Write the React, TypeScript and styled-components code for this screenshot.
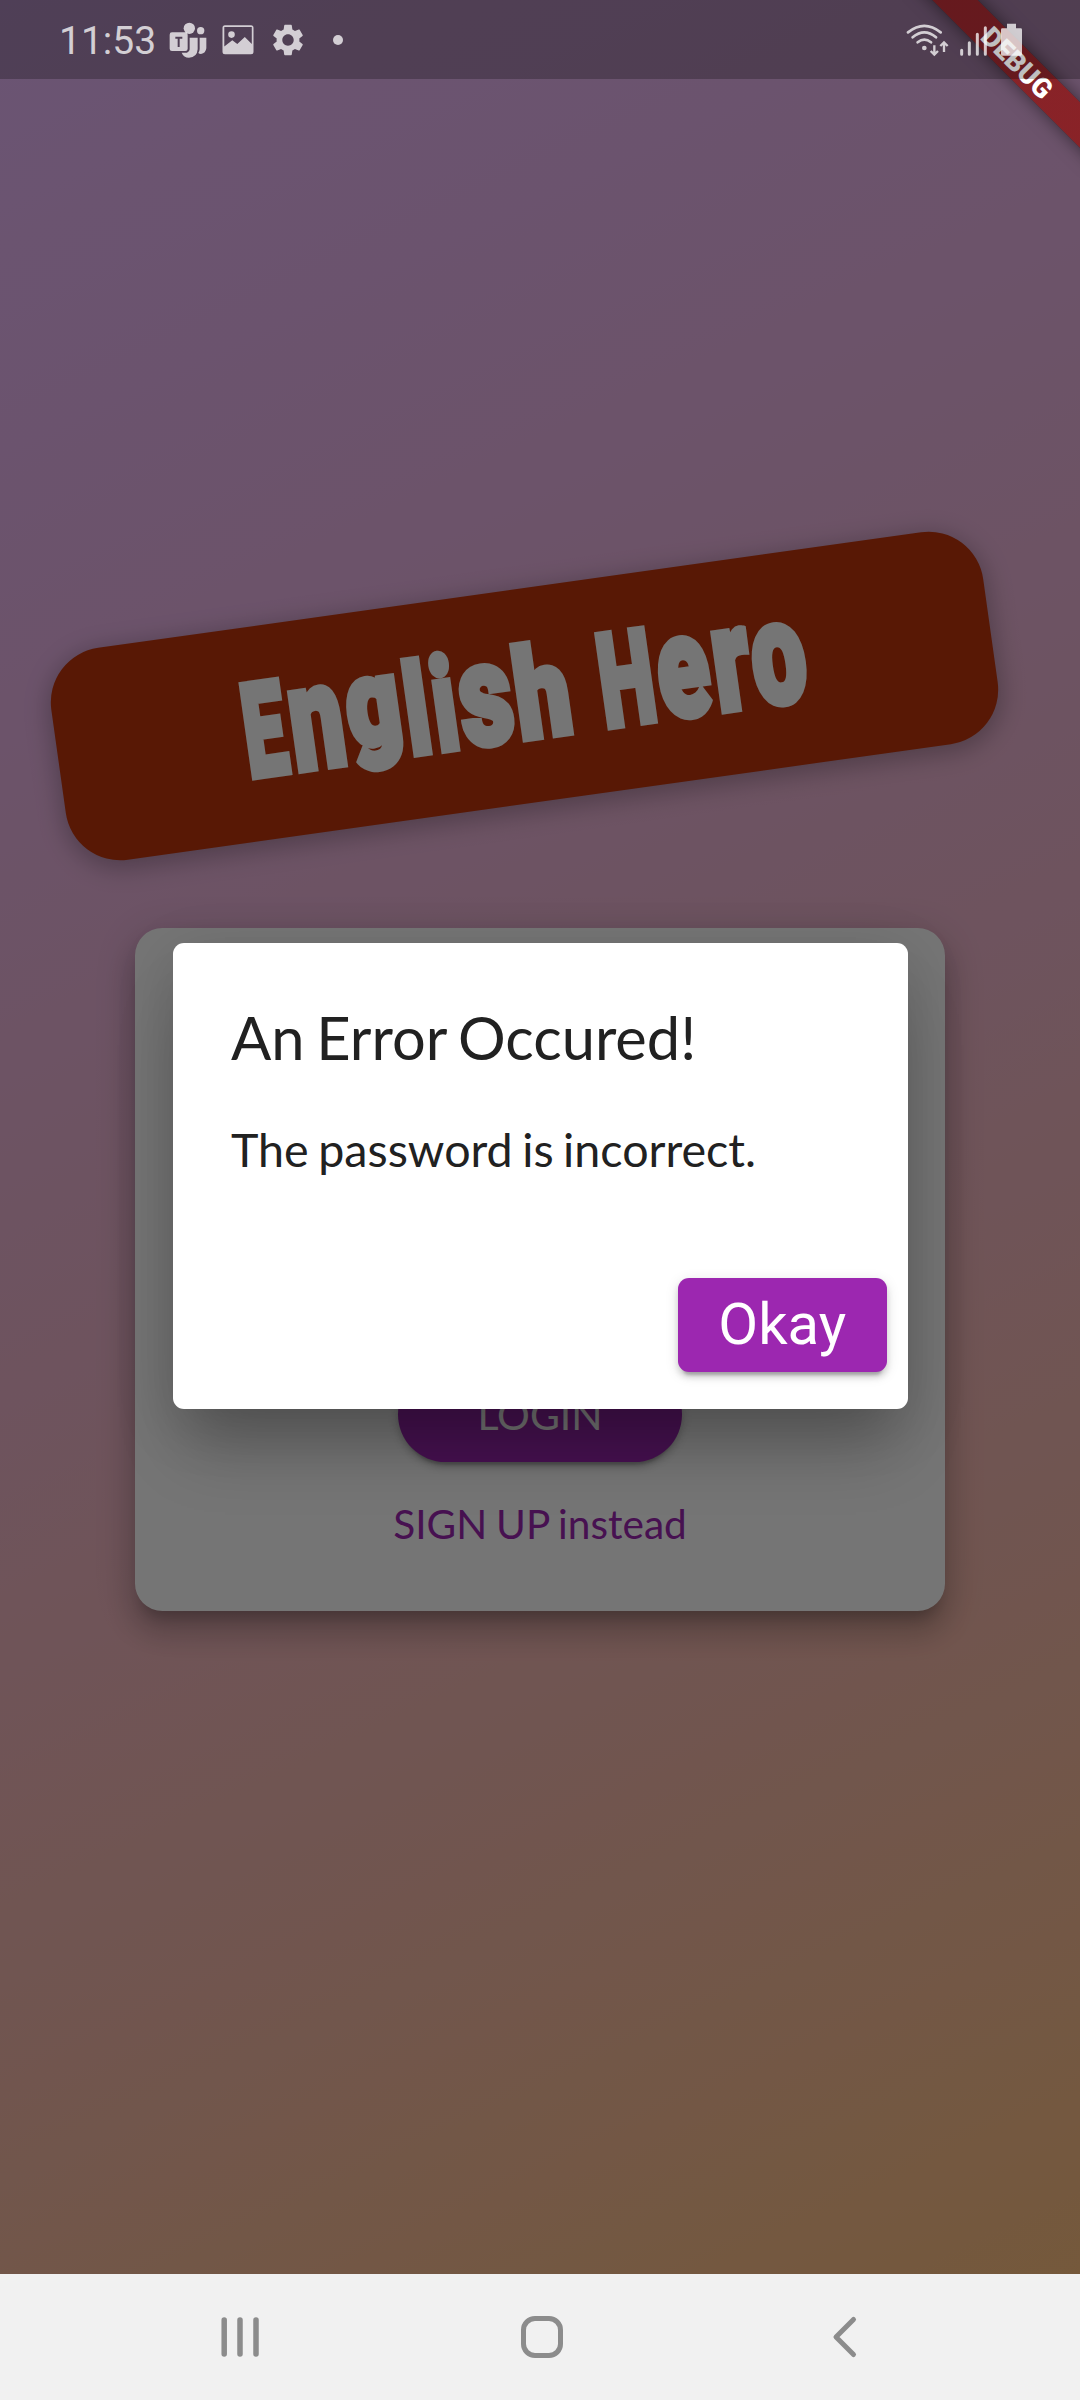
import React from "react";
import styled, { createGlobalStyle } from "styled-components";

const Global = createGlobalStyle`
  html, body { margin: 0; padding: 0; }
  body { font-family: Lato, "Liberation Sans", sans-serif; -webkit-font-smoothing: antialiased; }
  * { box-sizing: border-box; }
`;

const Phone = styled.div`
  width: 1080px;
  height: 2400px;
  display: flex;
  flex-direction: column;
  overflow: hidden;
`;

const Stage = styled.main`
  height: 2274px;
  display: grid;
  grid-template: 100% / 100%;
  overflow: hidden;
  > * { grid-area: 1 / 1; }
`;

const AuthPage = styled.section`
  display: flex;
  flex-direction: column;
  align-items: center;
  padding-top: 589px;
  background: linear-gradient(
    154.6deg,
    rgb(232, 184, 252) 0%,
    rgb(235, 181, 232) 25%,
    rgb(239, 182, 205) 50%,
    rgb(246, 186, 171) 75%,
    rgb(254, 194, 130) 100%
  );
`;

const Banner = styled.div`
  width: 941px;
  height: 214px;
  flex: none;
  margin-right: 31px;
  border-radius: 55px;
  background: #bf360c;
  box-shadow: 0 5.5px 24px 3px rgba(0, 0, 0, 0.26);
  transform: rotate(-8deg);
`;

const AuthCard = styled.div`
  width: 810px;
  height: 682.5px;
  margin-top: 125px;
  padding-bottom: 49px;
  border-radius: 27.5px;
  background: #fff;
  display: flex;
  flex-direction: column;
  justify-content: flex-end;
  align-items: center;
  gap: 34px;
  box-shadow: 0 14px 14px -8px rgba(0, 0, 0, 0.2), 0 22px 28px 3px rgba(0, 0, 0, 0.14),
    0 8px 38px 5px rgba(0, 0, 0, 0.12);
`;

const LoginButton = styled.button`
  width: 284px;
  height: 94.5px;
  border: 0;
  padding: 2px 0 0;
  border-radius: 48px;
  background: #9c27b0;
  color: #fff;
  font: 400 41px/48px Lato, sans-serif;
  box-shadow: 0 8px 3px -5px rgba(0, 0, 0, 0.2), 0 5px 6px rgba(0, 0, 0, 0.14),
    0 3px 14px rgba(0, 0, 0, 0.12);
`;

const SwitchLink = styled.button`
  border: 0;
  padding: 0 0 9px;
  background: none;
  color: #9c27b0;
  font: 400 40.6px/48px Lato, sans-serif;
  word-spacing: -1.5px;
  height: 66px;
`;

const Scrim = styled.div`
  z-index: 1;
  background: rgba(0, 0, 0, 0.54);
  display: flex;
  justify-content: center;
  align-items: flex-start;
  padding-top: 943.3px;
`;

const Dialog = styled.div`
  width: 735px;
  height: 466px;
  padding: 58px 21px 37px 58.5px;
  border-radius: 11px;
  background: #fff;
  color: #212121;
  display: flex;
  flex-direction: column;
  box-shadow: 0 50px 64px -14px rgba(0, 0, 0, 0.24), 0 14px 60px rgba(0, 0, 0, 0.14);
`;

const DialogTitle = styled.h1`
  margin: 0;
  font: 400 59.6px/72px Lato, sans-serif;
  word-spacing: -3.5px;
`;

const DialogText = styled.p`
  margin: 48px 0 0;
  font: 400 46.6px/56px Lato, sans-serif;
  word-spacing: -2.4px;
`;

const OkayButton = styled.button`
  margin-top: auto;
  align-self: flex-end;
  width: 208.5px;
  height: 94.5px;
  border: 0;
  padding: 0 0 3px;
  border-radius: 11px;
  background: #9c27b0;
  color: #fff;
  font: 400 58px/68px Roboto, sans-serif;
  box-shadow: 0 8px 3px -5px rgba(0, 0, 0, 0.2), 0 5px 6px rgba(0, 0, 0, 0.14),
    0 3px 14px rgba(0, 0, 0, 0.12);
`;

const DebugCorner = styled.div`
  z-index: 2;
  justify-self: end;
  width: 180px;
  height: 180px;
  overflow: hidden;
  display: flex;
  justify-content: center;
  align-items: center;
`;

const DebugRibbon = styled.div`
  flex: none;
  width: 260px;
  height: 32px;
  transform: translate(27.5px, -27.5px) rotate(45deg);
  background: linear-gradient(rgba(183, 28, 28, 0.627), rgba(183, 28, 28, 0.627)),
    rgba(0, 0, 0, 0.45);
  box-shadow: 0 0 17px rgba(0, 0, 0, 0.5);
  color: #fff;
  font: 900 27.5px/33px Roboto, sans-serif;
  text-align: center;
`;

const StatusBar = styled.header`
  z-index: 3;
  height: 79px;
  padding: 0 57px 0 59px;
  display: flex;
  align-items: center;
  background: rgba(0, 0, 0, 0.25);
  color: rgba(255, 255, 255, 0.75);
`;

const Clock = styled.span`
  width: 109.5px;
  padding-top: 3px;
  font: 400 39px/46px Roboto, sans-serif;
`;

const Spacer = styled.div`
  flex: 1;
`;

const Glyph = styled.svg<{ $gap?: number }>`
  display: block;
  flex: none;
  fill: currentColor;
  margin-left: ${(p) => p.$gap ?? 0}px;
`;

const NavBar = styled.nav`
  height: 126px;
  background: #f1f1f1;
  color: #8c8c8c;
  display: flex;
  align-items: center;
`;

const NavIcon = styled.svg<{ $gap: number }>`
  display: block;
  margin-left: ${(p) => p.$gap}px;
  fill: none;
  stroke: currentColor;
  stroke-width: 5;
  stroke-linecap: round;
  stroke-linejoin: round;
`;

const Wordmark = styled.svg`
  display: block;
  fill: #fff;
  stroke: #fff;
  stroke-width: 7;
  font-family: Roboto, sans-serif;
  font-weight: 900;
`;

type Letter = { ch: string; x: number; w: number; size: number; y?: number };

const letters: Letter[] = [
  { ch: "E", x: -1, w: 42, size: 130 },
  { ch: "n", x: 46, w: 54, size: 147 },
  { ch: "g", x: 104, w: 54, size: 121, y: -16 },
  { ch: "l", x: 162, w: 24, size: 125 },
  { ch: "i", x: 190, w: 24, size: 129 },
  { ch: "s", x: 217, w: 53, size: 144 },
  { ch: "h", x: 273, w: 55, size: 125 },
  { ch: " ", x: 328, w: 30, size: 130 },
  { ch: "H", x: 358, w: 55, size: 130 },
  { ch: "e", x: 417, w: 52, size: 144 },
  { ch: "r", x: 473, w: 37, size: 147 },
  { ch: "o", x: 512, w: 54, size: 144 },
];

function Title() {
  return (
    <Wordmark width="941" height="214" viewBox="0 0 941 214">
      <text xmlSpace="preserve">
        {letters.map((l, i) => (
          <tspan
            key={i}
            x={188 + l.x}
            y={149.5 + (l.y ?? 0)}
            fontSize={l.size}
            textLength={l.w}
            lengthAdjust="spacingAndGlyphs"
          >
            {l.ch}
          </tspan>
        ))}
      </text>
    </Wordmark>
  );
}

function StatusIcons() {
  return (
    <>
      <Glyph width="38" height="36" viewBox="506 64 114 108">
        <circle cx="567" cy="83" r="17" />
        <circle cx="601" cy="90" r="11" />
        <path
          fillRule="evenodd"
          d="M515 95h40q7 0 7 7v42q0 7-7 7h-40q-7 0-7-7v-42q0-7 7-7zM525 108v6h7v25h6v-25h8v-6z"
        />
        <path d="M568 111h24v35q-2 25-26 25-16 0-22-15h16q8-2 8-10z" />
        <path d="M598 111h20v32q-2 15-16 17-5 0-8-3 4-6 4-12z" />
      </Glyph>
      <Glyph $gap={15.5} width="32" height="30" viewBox="0 0 32 30">
        <path
          fillRule="evenodd"
          d="M3 .3h26q2.500 0 2.500 2.500v24q0 2.500-2.500 2.500H3Q.5 29.300.5 26.800v-24Q.5.3 3 .3zM2.300 2v19.500l8-6.200 5 3.700 7.500-7L29.800 19V2zM9.500 6.300a3.300 3.300 0 1 1 0 6.600 3.300 3.300 0 0 1 0-6.600z"
        />
      </Glyph>
      <Glyph $gap={15} width="38" height="38" viewBox="0 0 24 24">
        <path d="M19.140 12.940c.040-.300.060-.610.060-.940 0-.320-.020-.640-.070-.940l2.030-1.580c.180-.140.230-.410.120-.610l-1.920-3.320c-.120-.220-.370-.290-.590-.220l-2.390.960c-.500-.380-1.030-.700-1.620-.940l-.360-2.540c-.040-.240-.240-.410-.480-.410h-3.840c-.240 0-.430.170-.470.410l-.360 2.540c-.590.240-1.130.570-1.620.940l-2.390-.960c-.220-.080-.470 0-.590.220L2.740 8.870c-.120.210-.080.470.120.610l2.030 1.580c-.050.300-.090.630-.090.940s.020.640.070.940l-2.030 1.580c-.180.140-.230.410-.120.610l1.920 3.320c.120.220.370.290.590.220l2.390-.960c.500.380 1.030.700 1.620.940l.360 2.540c.050.240.240.410.480.410h3.840c.240 0 .440-.170.470-.410l.360-2.540c.590-.240 1.130-.560 1.620-.940l2.390.960c.220.080.470 0 .590-.220l1.920-3.320c.120-.220.070-.470-.120-.610l-2.010-1.580zM12 15.600c-1.980 0-3.600-1.620-3.600-3.600s1.620-3.600 3.600-3.600 3.600 1.620 3.600 3.600-1.620 3.600-3.600 3.600z" />
      </Glyph>
      <Glyph $gap={26} width="10" height="10" viewBox="0 0 10 10">
        <circle cx="5" cy="5" r="5" />
      </Glyph>
      <Spacer />
      <Glyph width="118" height="34" viewBox="135 67 354 102">
        <g fill="none" stroke="currentColor" strokeWidth="8" strokeLinecap="round">
          <path d="M144 95Q193 56 242 95M158 110q35-30 70 0M173 125q20-16 40 0" />
          <path d="M223 134v27m-11-10 11 11 11-11M252 154v-28m-11 10 11-11 11 11" strokeWidth="7" strokeLinecap="butt" />
          <path d="M305 149v12M328 126v35M352 101v60M376 81v80" strokeWidth="9" />
        </g>
        <circle cx="193" cy="142" r="7" />
        <path d="M441 69h27v14h14q4 0 4 4v74q0 4-4 4h-55q-4 0-4-4V87q0-4 4-4h14z" />
      </Glyph>
    </>
  );
}

export default function App() {
  return (
    <Phone>
      <Global />
      <Stage>
        <AuthPage>
          <Banner>
            <Title />
          </Banner>
          <AuthCard>
            <LoginButton>LOGIN</LoginButton>
            <SwitchLink>SIGN UP instead</SwitchLink>
          </AuthCard>
        </AuthPage>
        <Scrim>
          <Dialog role="alertdialog">
            <DialogTitle>An Error Occured!</DialogTitle>
            <DialogText>The password is incorrect.</DialogText>
            <OkayButton>Okay</OkayButton>
          </Dialog>
        </Scrim>
        <DebugCorner>
          <DebugRibbon>DEBUG</DebugRibbon>
        </DebugCorner>
        <StatusBar>
          <Clock>11:53</Clock>
          <StatusIcons />
        </StatusBar>
      </Stage>
      <NavBar>
        <NavIcon $gap={219} width="42" height="44" viewBox="219 2315 42 44">
          <path d="M224.200 2320v34M240 2320v34M256 2320v34" strokeWidth="5.500" />
        </NavIcon>
        <NavIcon $gap={259} width="44" height="44" viewBox="520 2315 44 44">
          <rect x="523.500" y="2318.500" width="37" height="37" rx="11.500" />
        </NavIcon>
        <NavIcon $gap={268} width="26" height="44" viewBox="832 2315 26 44">
          <path d="M853.500 2319.500 836 2337l17.500 17.500" />
        </NavIcon>
      </NavBar>
    </Phone>
  );
}
